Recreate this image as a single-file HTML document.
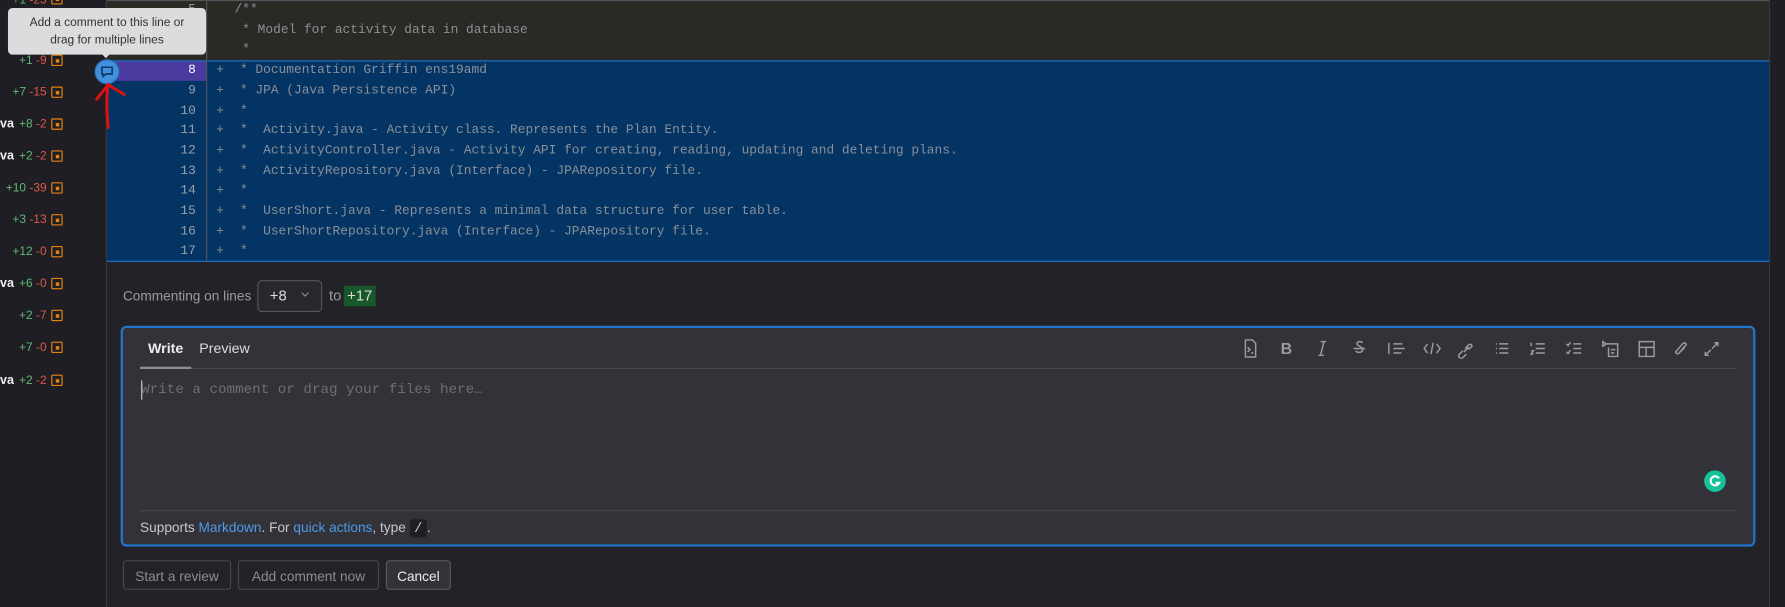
<!DOCTYPE html>
<html><head><meta charset="utf-8"><style>
html,body{margin:0;padding:0;background:#232228;overflow:hidden;width:1785px;height:607px}
#w{position:absolute;left:0;top:0;width:1568px;height:533px;transform:scale(1.13839,1.1388);transform-origin:0 0;font-family:"Liberation Sans",sans-serif}
.a{position:absolute}
.mono{font-family:"Liberation Mono",monospace}
.side{left:0;top:0;width:93px;height:533px;background:#1f1e24;border-right:1px solid #3a3940}
.st{position:absolute;right:52px;font-size:10.5px;white-space:nowrap}
.st .g{color:#5fb874}.st .r{color:#e0564a}
.ic{position:absolute;left:45px;width:8px;height:8px;border:1.5px solid #e9830e;border-radius:1px}
.ic:after{content:"";position:absolute;left:2.5px;top:2.5px;width:3px;height:3px;background:#e9830e}
.va{position:absolute;left:0;font-size:11px;font-weight:bold;color:#eee}
.row{position:absolute;left:94px;width:1460px;height:17.7px;font-size:11.3px;line-height:17.7px}
.ln{position:absolute;left:0;width:78px;text-align:right;color:#9aa0a8}
.pl{position:absolute;left:96px;color:#8a8f98}
.cd{position:absolute;left:110px;color:#8a8f98;white-space:pre}
.btn{position:absolute;top:492px;height:26px;border:1px solid #48474f;border-radius:3px;font-size:12px;line-height:26px;text-align:center;color:#8d8c93;box-sizing:border-box}
</style></head><body><div id="w">
<div class="a side">
<div class="st" style="top:-6px"><span class="g">+1</span> <span class="r">-23</span></div><div class="ic" style="top:-6px"></div>
<div class="st" style="top:47px"><span class="g">+1</span> <span class="r">-9</span></div><div class="ic" style="top:48px"></div>
<div class="st" style="top:75px"><span class="g">+7</span> <span class="r">-15</span></div><div class="ic" style="top:76px"></div>
<div class="va" style="top:103px">va</div><div class="st" style="top:103px"><span class="g">+8</span> <span class="r">-2</span></div><div class="ic" style="top:104px"></div>
<div class="va" style="top:131px">va</div><div class="st" style="top:131px"><span class="g">+2</span> <span class="r">-2</span></div><div class="ic" style="top:132px"></div>
<div class="st" style="top:159px"><span class="g">+10</span> <span class="r">-39</span></div><div class="ic" style="top:160px"></div>
<div class="st" style="top:187px"><span class="g">+3</span> <span class="r">-13</span></div><div class="ic" style="top:188px"></div>
<div class="st" style="top:215px"><span class="g">+12</span> <span class="r">-0</span></div><div class="ic" style="top:216px"></div>
<div class="va" style="top:243px">va</div><div class="st" style="top:243px"><span class="g">+6</span> <span class="r">-0</span></div><div class="ic" style="top:244px"></div>
<div class="st" style="top:271px"><span class="g">+2</span> <span class="r">-7</span></div><div class="ic" style="top:272px"></div>
<div class="st" style="top:299px"><span class="g">+7</span> <span class="r">-0</span></div><div class="ic" style="top:300px"></div>
<div class="va" style="top:328px">va</div><div class="st" style="top:328px"><span class="g">+2</span> <span class="r">-2</span></div><div class="ic" style="top:329px"></div>
</div>
<!-- diff -->
<div class="a" style="left:94px;top:0;width:1460px;height:1px;background:#55545a"></div>
<div class="a" style="left:94px;top:1px;width:1460px;height:52px;background:#2a2a24"></div>
<div class="a" style="left:94px;top:53px;width:1460px;height:177px;background:#033464;border-top:1px solid #1f75cb;border-bottom:1px solid #1f75cb;box-sizing:border-box"></div>
<div class="a" style="left:94px;top:54px;width:87px;height:17px;background:#4b3aa0"></div>
<div class="a" style="left:181px;top:0;width:1px;height:230px;background:#55545a"></div>
<div class="a" style="left:1554px;top:0;width:1px;height:533px;background:#3a3940"></div>
<div class="a" style="left:1555px;top:0;width:13px;height:533px;background:#1f1e24"></div>
<div class="row mono" style="top:1px"><span class="ln">5</span><span class="cd" style="left:112px">/**</span></div>
<div class="row mono" style="top:18.7px"><span class="cd" style="left:112px"> * Model for activity data in database</span></div>
<div class="row mono" style="top:36.4px"><span class="ln">7</span><span class="cd" style="left:112px"> *</span></div>
<div class="row mono" style="top:54.1px"><span class="ln" style="color:#fff">8</span><span class="pl">+</span><span class="cd"> * Documentation Griffin ens19amd</span></div>
<div class="row mono" style="top:71.8px"><span class="ln">9</span><span class="pl">+</span><span class="cd"> * JPA (Java Persistence API)</span></div>
<div class="row mono" style="top:89.5px"><span class="ln">10</span><span class="pl">+</span><span class="cd"> *</span></div>
<div class="row mono" style="top:107.2px"><span class="ln">11</span><span class="pl">+</span><span class="cd"> *  Activity.java - Activity class. Represents the Plan Entity.</span></div>
<div class="row mono" style="top:124.9px"><span class="ln">12</span><span class="pl">+</span><span class="cd"> *  ActivityController.java - Activity API for creating, reading, updating and deleting plans.</span></div>
<div class="row mono" style="top:142.6px"><span class="ln">13</span><span class="pl">+</span><span class="cd"> *  ActivityRepository.java (Interface) - JPARepository file.</span></div>
<div class="row mono" style="top:160.3px"><span class="ln">14</span><span class="pl">+</span><span class="cd"> *</span></div>
<div class="row mono" style="top:178px"><span class="ln">15</span><span class="pl">+</span><span class="cd"> *  UserShort.java - Represents a minimal data structure for user table.</span></div>
<div class="row mono" style="top:195.7px"><span class="ln">16</span><span class="pl">+</span><span class="cd"> *  UserShortRepository.java (Interface) - JPARepository file.</span></div>
<div class="row mono" style="top:213.4px"><span class="ln">17</span><span class="pl">+</span><span class="cd"> *</span></div>
<!-- tooltip -->
<div class="a" style="left:7px;top:7px;width:174px;height:41px;background:#dcdcde;border-radius:4px;color:#333;font-size:10.5px;text-align:center;line-height:15px;padding-top:6px;box-sizing:border-box">Add a comment to this line or<br>drag for multiple lines</div>
<div class="a" style="left:89px;top:47px;width:0;height:0;border-left:4px solid transparent;border-right:4px solid transparent;border-top:4px solid #dcdcde"></div>
<!-- comment button -->
<div class="a" style="left:83px;top:52px;width:20px;height:20px;border-radius:50%;background:#428fdc;border:1px solid #2c6fb8"></div>
<svg class="a" style="left:88px;top:57px" width="12" height="12" viewBox="0 0 12 12"><path d="M1.5 2h9v6H5l-2.5 2V8h-1z" fill="none" stroke="#0b2f5a" stroke-width="1.3"/></svg>
<!-- red arrow -->
<svg class="a" style="left:80px;top:66px" width="40" height="50" viewBox="0 0 40 50"><path d="M15 46 C14 35 13 22 15 8 M15 8 C11 14 8 17 5 21 M15 8 C20 12 25 14 29 17" fill="none" stroke="#e01010" stroke-width="2.6" stroke-linecap="round"/></svg>
<!-- commenting -->
<div class="a" style="left:108px;top:253px;font-size:12px;color:#9a9aa0">Commenting on lines</div>
<div class="a" style="left:226px;top:246px;width:57px;height:28px;border:1px solid #56555c;border-radius:4px;box-sizing:border-box;background:#28272d"></div>
<div class="a" style="left:237px;top:252px;font-size:13px;color:#ddd">+8</div>
<svg class="a" style="left:264px;top:256px" width="8" height="6"><path d="M1 1l3 3 3-3" fill="none" stroke="#888" stroke-width="1"/></svg>
<div class="a" style="left:289px;top:252px;font-size:13px;color:#9a9aa0">to</div>
<div class="a" style="left:302px;top:251px;width:28px;height:18px;background:#17572a;color:#ddd;font-size:13px;line-height:18px;text-align:center">+17</div>
<!-- editor -->
<div class="a" style="left:106px;top:286px;width:1436px;height:194px;background:#333238;border:2px solid #1f75cb;border-radius:5px;box-sizing:border-box"></div>
<div class="a" style="left:130px;top:299px;font-size:12.5px;color:#eee;font-weight:bold">Write</div>
<div class="a" style="left:175px;top:299px;font-size:12.5px;color:#ddd">Preview</div>
<div class="a" style="left:123px;top:323px;width:1402px;height:1px;background:#4a4950"></div>
<div class="a" style="left:123px;top:322px;width:45px;height:2px;background:#8f8e94"></div>
<div class="a mono" style="left:124px;top:335px;font-size:12.5px;color:#6e6e74">Write a comment or drag your files here…</div>
<div class="a" style="left:124px;top:334px;width:1px;height:17px;background:#ccc"></div>
<div class="a" style="left:123px;top:448px;width:1402px;height:1px;background:#4a4950"></div>
<div class="a" style="left:123px;top:456px;font-size:12px;color:#c8c8cc">Supports <span style="color:#4d9ae8">Markdown</span>. For <span style="color:#4d9ae8">quick actions</span>, type <span class="mono" style="background:#1f1e24;padding:1px 4px;border-radius:3px">/</span>.</div>
<div class="a" style="left:1497px;top:413px;width:19px;height:19px;border-radius:50%;background:#15c39a"></div>
<svg class="a" style="left:1500px;top:416px" width="13" height="13" viewBox="0 0 13 13"><path d="M10 4A4 4 0 1 0 10.3 8H7" fill="none" stroke="#fff" stroke-width="1.8"/></svg>
<!-- toolbar -->
<svg class="a" style="left:1090px;top:297px" width="440" height="18" viewBox="0 0 440 18" fill="none" stroke="#9a9aa0" stroke-width="1.3">
<path d="M4 1.5h6l3 3v12H4z M6 8l2 2-2 2 M9 13h2"/>
<text x="35" y="14" fill="#9a9aa0" stroke="none" font-family="Liberation Sans" font-weight="bold" font-size="14">B</text>
<path d="M70 3h5 M68 15h5 M73 3l-3 12"/>
<path d="M99 9h10 M107 4c-1-1.5-5-1.5-5 1 0 2 5 2 5 5 0 3-5 3-6 1"/>
<path d="M130 4v10 M134 5h8 M134 9h10 M134 13h7"/>
<path d="M164 5l-3 4 3 4 M172 5l3 4-3 4 M169 4l-2 10"/>
<path d="M197 9l3-3c1-1 3-1 3 1l-3 3 M195 11l-3 3c-1 1-1 2 0 3 1 1 2 1 3 0l3-3 M196 12l4-4"/>
<path d="M224 5h1 M224 9h1 M224 13h1 M227 5h8 M227 9h8 M227 13h8"/>
<path d="M255 4v3 M259 5h8 M259 9h8 M259 13h8 M255 11h2l-2 3h2"/>
<path d="M286 5l1.5 1.5 2-3 M286 12l1.5 1.5 2-3 M292 5h7 M292 9h7 M292 13h7"/>
<path d="M321 5h10v11h-8v-8 M325 10h4 M325 13h3 M318 3v4l3-2z"/>
<path d="M350 3h13v13h-13z M350 8h13 M356 8v8"/>
<path d="M390 8l-5 5c-1 1-3 1-3-1l6-7c2-2 4 0 3 1l-6 7"/>
<path d="M414 9l5-5 M416 4h3v3 M413 10l-5 5 M408 12v3h3"/>
</svg>
<!-- buttons -->
<div class="btn" style="left:108px;width:95px">Start a review</div>
<div class="btn" style="left:209px;width:124px">Add comment now</div>
<div class="btn" style="left:339px;width:57px;color:#ececef;background:#333238;border-color:#5a5960">Cancel</div>
</div></body></html>
